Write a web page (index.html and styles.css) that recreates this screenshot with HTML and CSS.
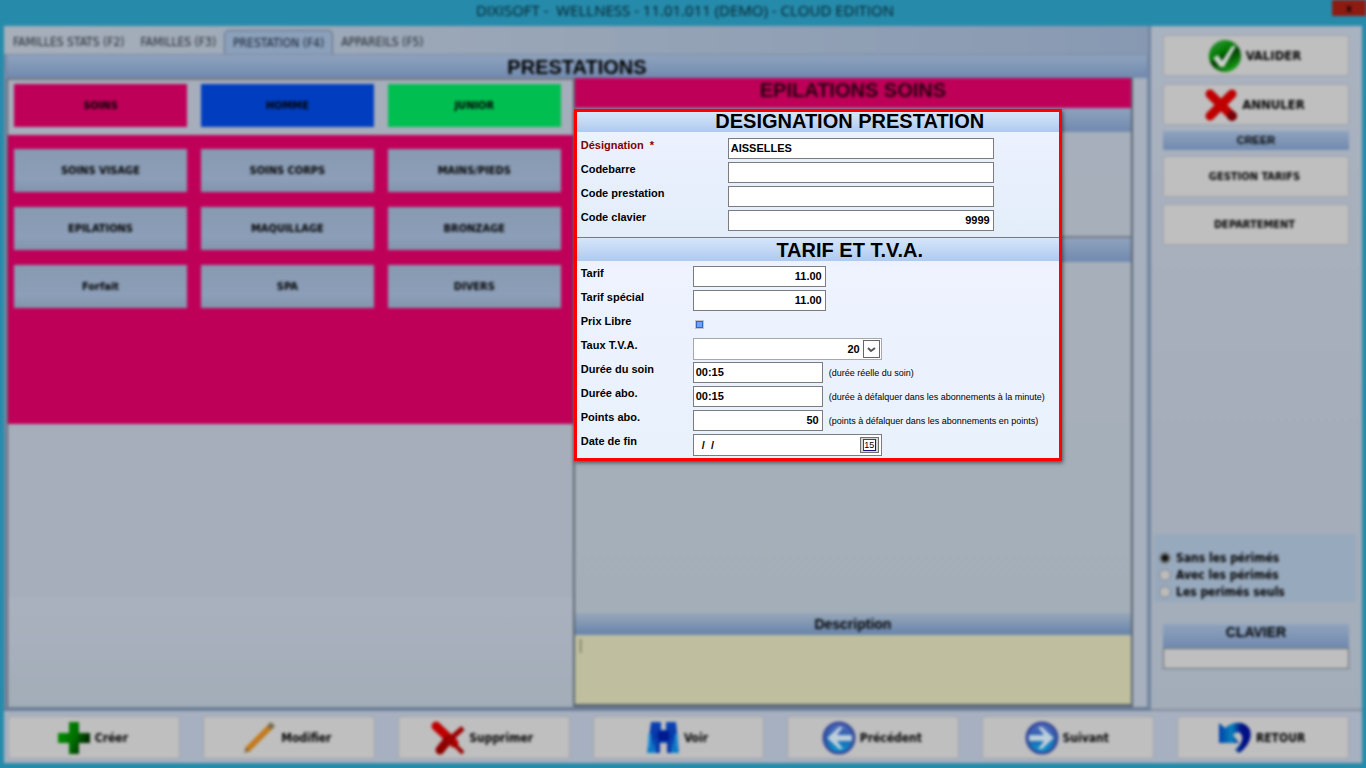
FILE: index.html
```html
<!DOCTYPE html>
<html lang="fr">
<head>
<meta charset="utf-8">
<meta name="viewport" content="width=device-width, initial-scale=1">
<title>DIXISOFT - WELLNESS</title>
<link rel="stylesheet" href="styles.css">
</head>
<body>
<div class="stage">
  <div class="app">
    <header class="titlebar">
      <h1 class="titlebar-text">DIXISOFT -&nbsp; WELLNESS - 11.01.011 (DEMO) - CLOUD EDITION</h1>
      <button class="close" type="button" aria-label="Fermer">x</button>
    </header>
    <div class="workspace">
      <main class="main">
        <nav class="tabs">
          <button class="tab" type="button">FAMILLES STATS (F2)</button>
          <button class="tab" type="button">FAMILLES (F3)</button>
          <button class="tab tab-active" type="button">PRESTATION (F4)</button>
          <button class="tab" type="button">APPAREILS (F5)</button>
        </nav>
        <div class="sheet">
          <h2 class="band sheet-title">PRESTATIONS</h2>
          <div class="columns">
            <section class="catalog">
              <div class="departments">
                <button class="tile tile-pink" type="button">SOINS</button>
                <button class="tile tile-blue" type="button">HOMME</button>
                <button class="tile tile-green" type="button">JUNIOR</button>
              </div>
              <div class="families">
                <button class="tile" type="button">SOINS VISAGE</button>
                <button class="tile" type="button">SOINS CORPS</button>
                <button class="tile" type="button">MAINS/PIEDS</button>
                <button class="tile" type="button">EPILATIONS</button>
                <button class="tile" type="button">MAQUILLAGE</button>
                <button class="tile" type="button">BRONZAGE</button>
                <button class="tile" type="button">Forfait</button>
                <button class="tile" type="button">SPA</button>
                <button class="tile" type="button">DIVERS</button>
              </div>
            </section>
            <section class="detail">
              <h2 class="detail-title">EPILATIONS SOINS</h2>
              <div class="band detail-band"></div>
              <div class="detail-top"></div>
              <div class="band detail-band"></div>
              <div class="detail-fill"></div>
              <label class="band description-label" for="description">Description</label>
              <textarea class="description" id="description">|</textarea>
            </section>
          </div>
        </div>
      </main>
      <aside class="side">
        <button class="btn btn-large" type="button">
          <svg class="icon" viewBox="0 0 34 34" aria-hidden="true">
            <defs><linearGradient id="ok" x1="0" y1="0" x2="0.6" y2="1"><stop offset="0" stop-color="#3f9c4c"/><stop offset="0.45" stop-color="#007b00"/><stop offset="0.6" stop-color="#003c00"/><stop offset="1" stop-color="#18a018"/></linearGradient></defs>
            <circle cx="17" cy="17" r="16" fill="url(#ok)"/>
            <path d="M5 19l5-3 4 6L24 7h4L16 28h-4z" fill="#c9d3cc"/>
          </svg>VALIDER</button>
        <button class="btn btn-large" type="button">
          <svg class="icon" viewBox="0 0 34 34" aria-hidden="true">
            <path d="M6 6l22 22M28 6L6 28" stroke="#c00000" stroke-width="9" stroke-linecap="round"/>
            <circle cx="28" cy="28" r="5" fill="#760008"/>
          </svg>ANNULER</button>
        <h3 class="band side-title">CREER</h3>
        <button class="btn" type="button">GESTION TARIFS</button>
        <button class="btn" type="button">DEPARTEMENT</button>
        <fieldset class="filters">
          <label class="radio"><input type="radio" name="perimes" checked>Sans les périmés</label>
          <label class="radio"><input type="radio" name="perimes">Avec les périmés</label>
          <label class="radio"><input type="radio" name="perimes">Les perimés seuls</label>
        </fieldset>
        <label class="band keypad-label" for="keypad">CLAVIER</label>
        <input class="keypad" id="keypad" type="text">
      </aside>
    </div>
    <footer class="actions">
      <button class="btn" type="button">
        <svg class="icon" viewBox="0 0 34 34" aria-hidden="true">
          <defs><linearGradient id="plus" x1="0" y1="0" x2="1" y2="0.4"><stop offset="0" stop-color="#009400"/><stop offset="0.6" stop-color="#007000"/><stop offset="1" stop-color="#002800"/></linearGradient></defs>
          <path d="M12 1h10v11h11v10H22v11H12V22H1V12h11z" fill="url(#plus)"/>
        </svg>Créer</button>
      <button class="btn" type="button">
        <svg class="icon" viewBox="0 0 34 34" aria-hidden="true">
          <path d="M4 29L28 5" stroke="#c27a1c" stroke-width="6"/>
          <path d="M26 7l4-4" stroke="#7d6a4c" stroke-width="6"/>
          <path d="M1 32l2-6 4 4z" fill="#8b6a3a"/>
        </svg>Modifier</button>
      <button class="btn" type="button">
        <svg class="icon" viewBox="0 0 34 34" aria-hidden="true">
          <path d="M5 5l18 17" stroke="#c00000" stroke-width="9" stroke-linecap="round"/>
          <path d="M18 18l14 14" stroke="#9c0000" stroke-width="4"/>
          <path d="M9 29l8-10" stroke="#8e0000" stroke-width="9" stroke-linecap="round"/>
          <path d="M16 21L32 7" stroke="#9c0000" stroke-width="5"/>
        </svg>Supprimer</button>
      <button class="btn" type="button">
        <svg class="icon" viewBox="0 0 34 34" aria-hidden="true">
          <defs><linearGradient id="bino" x1="0" y1="0" x2="0" y2="1"><stop offset="0" stop-color="#0a43b4"/><stop offset="0.5" stop-color="#0536a8"/><stop offset="1" stop-color="#0e86cc"/></linearGradient></defs>
          <path d="M5 1h10v8h5V1h10l3 31H21V22h-7v10H1z" fill="url(#bino)"/>
          <path d="M12 10h11v10H12z" fill="#001a90"/>
          <path d="M4 13v14M30 13v14" stroke="#168cd4" stroke-width="3"/>
          <path d="M12 20v12M23 20v12" stroke="#0a35a4" stroke-width="4"/>
        </svg>Voir</button>
      <button class="btn" type="button">
        <svg class="icon" viewBox="0 0 34 34" aria-hidden="true">
          <defs><linearGradient id="disc" x1="0" y1="0" x2="0" y2="1"><stop offset="0" stop-color="#5a6cc0"/><stop offset="0.5" stop-color="#245caa"/><stop offset="1" stop-color="#00a0d4"/></linearGradient></defs>
          <circle cx="17" cy="17" r="15" fill="url(#disc)" stroke="#34499a" stroke-width="3"/>
          <path d="M5 17L17 6h4l-6 8h15v6H15l6 8h-4z" fill="#bccfdc"/>
        </svg>Précédent</button>
      <button class="btn" type="button">
        <svg class="icon" viewBox="0 0 34 34" aria-hidden="true">
          <circle cx="17" cy="17" r="15" fill="url(#disc)" stroke="#34499a" stroke-width="3"/>
          <path d="M29 17L17 6h-4l6 8H4v6h15l-6 8h4z" fill="#bccfdc"/>
        </svg>Suivant</button>
      <button class="btn" type="button">
        <svg class="icon" viewBox="0 0 34 34" aria-hidden="true">
          <defs><linearGradient id="undo" x1="0" y1="0" x2="1" y2="0"><stop offset="0" stop-color="#0040a8"/><stop offset="0.4" stop-color="#0880bc"/><stop offset="0.7" stop-color="#001484"/><stop offset="1" stop-color="#000c88"/></linearGradient></defs>
          <path d="M1 2l6 5C15 0 26 0 31 7c5 9-2 20-10 25l-4-3c7-6 9-12 6-16-2-3-6-2-8 1l6 8H1z" fill="url(#undo)"/>
        </svg>RETOUR</button>
    </footer>
  </div>

  <form class="dialog">
    <h2 class="dialog-title">DESIGNATION PRESTATION</h2>
    <div class="rows rows-wide">
      <label class="label label-required" for="designation">Désignation &nbsp;*</label>
      <input class="field" id="designation" type="text" value="AISSELLES">
      <label class="label" for="barcode">Codebarre</label>
      <input class="field" id="barcode" type="text">
      <label class="label" for="code">Code prestation</label>
      <input class="field" id="code" type="text">
      <label class="label" for="key">Code clavier</label>
      <input class="field field-number" id="key" type="text" value="9999">
    </div>
    <h2 class="dialog-title dialog-title-next">TARIF ET T.V.A.</h2>
    <div class="rows">
      <label class="label" for="price">Tarif</label>
      <input class="field field-number field-price" id="price" type="text" value="11.00">
      <label class="label" for="special">Tarif spécial</label>
      <input class="field field-number field-price" id="special" type="text" value="11.00">
      <label class="label" for="free">Prix Libre</label>
      <input class="check" id="free" type="checkbox">
      <label class="label" for="vat">Taux T.V.A.</label>
      <div class="picker picker-light">
        <select class="picker-value picker-select" id="vat"><option>20</option></select>
        <span class="picker-arrow"><svg viewBox="0 0 15 16" aria-hidden="true"><path d="M4 7l3 3 4-3" fill="none" stroke="#555" stroke-width="2"/></svg></span>
      </div>
      <label class="label" for="duration">Durée du soin</label>
      <div class="pair"><input class="field field-short" id="duration" type="text" value="00:15"><span class="hint">(durée réelle du soin)</span></div>
      <label class="label" for="duration-sub">Durée abo.</label>
      <div class="pair"><input class="field field-short" id="duration-sub" type="text" value="00:15"><span class="hint">(durée à défalquer dans les abonnements à la minute)</span></div>
      <label class="label" for="points">Points abo.</label>
      <div class="pair"><input class="field field-short field-number" id="points" type="text" value="50"><span class="hint">(points à défalquer dans les abonnements en points)</span></div>
      <label class="label" for="end">Date de fin</label>
      <div class="picker">
        <input class="picker-value picker-date" id="end" type="text" value="  /  /">
        <button class="calendar" type="button" aria-label="Choisir une date"><span class="calendar-page">15</span></button>
      </div>
    </div>
  </form>
</div>
</body>
</html>
```
FILE: styles.css
```css
* { box-sizing: border-box; }

body {
  margin: 0;
  background: #268bab;
  color: #000;
  font-family: "Liberation Sans", Arial, sans-serif;
  font-size: 11px;
}

h1, h2, h3 { margin: 0; }

button, input, select, textarea {
  margin: 0;
  padding: 0;
  border: 0;
  color: inherit;
  font: inherit;
}

.stage { position: relative; overflow: hidden; }

.app {
  display: flex;
  flex-direction: column;
  min-height: 100vh;
  padding: 0 4px 5px;
  background: #268bab;
  filter: blur(1.4px);
}

.titlebar {
  display: flex;
  flex: 0 0 26px;
  align-items: flex-start;
  margin-right: -4px;
  padding-left: 34px;
}

.titlebar-text {
  flex: 1;
  color: #031c25;
  font-family: "Open Sans", "Noto Sans", sans-serif;
  font-size: 15px;
  font-weight: 400;
  line-height: 21px;
  text-align: center;
}

.close {
  width: 34px;
  height: 16px;
  background: #8e1b12;
  font-weight: 700;
  line-height: 11px;
}

.workspace { display: flex; flex: 1; }

.main {
  display: flex;
  flex: 1;
  flex-direction: column;
  min-width: 0;
  border-right: 3px solid #7285a3;
  border-bottom: 4px solid #6d7e98;
  background: linear-gradient(90deg, #a6afba, #8799b2);
}

.tabs {
  display: flex;
  height: 28px;
  padding: 4px 0 0 1px;
}

.tab {
  padding: 0 8px;
  border-radius: 5px 5px 0 0;
  background: none;
  color: #20262e;
  font-family: "DejaVu Sans Condensed", "DejaVu Sans", sans-serif;
  font-size: 12px;
}

.tab-active {
  border: 1px solid #5e6f86;
  border-bottom: 0;
  background: #8ba0bb;
  color: #101c2c;
}

.sheet {
  display: flex;
  flex: 1;
  flex-direction: column;
  padding-right: 14px;
  border: 1px solid #7789a4;
  border-width: 1px 1px 0 3px;
  background: #a6b0be;
}

.band {
  background: linear-gradient(#8fa3bd, #7089ae);
  font-weight: 700;
  text-align: center;
}

.sheet-title {
  height: 23px;
  margin-right: -14px;
  font-size: 20px;
  line-height: 24px;
}

.columns {
  display: grid;
  flex: 1;
  grid-template-columns: 102fr 101fr;
}

.catalog {
  border-top: 2px solid #737780;
  border-left: 1px solid #54585e;
  background: linear-gradient(#a6aebb 0 517px, #aab1be 517px, #a2adb8);
}

.departments, .families {
  display: grid;
  grid-template-columns: repeat(3, 1fr);
  gap: 15px 14px;
  padding: 4px 12px 8px 6px;
}

.families {
  min-height: 289px;
  align-content: start;
  padding-top: 14px;
  background: #bf0059;
}

.tile {
  height: 43px;
  background: linear-gradient(#879ab0, #8c9eb8 70%, #8295ac);
  font-family: "DejaVu Sans Condensed", "DejaVu Sans", sans-serif;
  font-weight: 700;
  line-height: 41px;
}

.tile-pink { background: #bf0059; }
.tile-blue { background: #003ebf; }
.tile-green { background: #00bf51; }

.detail {
  display: flex;
  flex-direction: column;
  border: 2px solid #5b6672;
  border-width: 0 2px 3px;
  background: linear-gradient(#a8afbc, #a3aeb7);
}

.detail-title {
  height: 30px;
  background: #bf0059;
  color: #26000f;
  font-size: 20px;
  line-height: 25px;
  text-align: center;
}

.detail-band { height: 24px; }
.detail-top { height: 106px; border-bottom: 2px solid #747b86; }
.detail-fill { flex: 1; }

.description-label {
  height: 22px;
  background: linear-gradient(#97a7b8, #6783ab);
  font-size: 14px;
  line-height: 23px;
}

.description {
  height: 69px;
  padding: 2px 4px;
  resize: none;
  background: #bfbf9f;
  color: #62624c;
  font-size: 14px;
}

.side {
  display: flex;
  flex: 0 0 211px;
  flex-direction: column;
  padding: 9px 13px 40px 12px;
  border-bottom: 2px solid #838b98;
  background: linear-gradient(#a9b2c0, #a6adba 60%, #a3adba);
}

.btn {
  display: flex;
  align-items: center;
  justify-content: center;
  gap: 4px;
  height: 41px;
  margin-bottom: 7px;
  padding-right: 3px;
  border: 1px solid #a0a4aa;
  border-radius: 3px;
  background: #bfbfbf;
  font-family: "DejaVu Sans Condensed", "DejaVu Sans", sans-serif;
  font-weight: 700;
}

.btn-large { font-size: 13px; }
.side .btn-large { margin-bottom: 8px; }
.icon { width: 34px; height: 34px; flex: none; fill: none; }

.side-title {
  margin: -2px 0 6px;
  height: 19px;
  font-size: 11px;
  line-height: 18px;
}

.filters {
  margin: auto -7px 22px -9px;
  padding: 15px 0 2px 5px;
  border: 0;
  background: #97a9bd;
}

.radio {
  display: flex;
  align-items: center;
  gap: 5px;
  height: 17px;
  font-family: "DejaVu Sans Condensed", "DejaVu Sans", sans-serif;
  font-size: 12px;
  font-weight: 700;
}

.radio input {
  width: 12px;
  height: 12px;
  appearance: none;
  border: 1px solid #7b8188;
  border-radius: 50%;
  background: #bcbcbc;
}

.radio input:checked { background: radial-gradient(#111 0 3px, #777 4px); }

.keypad-label {
  height: 24px;
  font-size: 14px;
  line-height: 16px;
}

.keypad {
  height: 21px;
  border: 1px solid #666e78;
  background: #bfbfbf;
}

.actions {
  display: grid;
  grid-template-columns: repeat(7, 1fr);
  gap: 23px;
  padding: 5px 13px 4px 4px;
  background: #a7b0c0;
}

.actions .btn { height: 43px; margin: 0; font-size: 12px; }

.dialog {
  position: absolute;
  top: 109px;
  left: 42%;
  width: 488px;
  border: 3px solid #f00;
  background: linear-gradient(#edf2fe, #e3edfa 36%, #eef3fe 45%, #e8f1fc);
  box-shadow: 1px 2px 4px #0008;
}

.dialog-title {
  height: 20px;
  padding-left: 64px;
  background: linear-gradient(#d6e6fa, #aecaf0);
  font-size: 20px;
  line-height: 19px;
  text-align: center;
}

.dialog-title-next {
  height: 24px;
  border-top: 1px solid #777b82;
  line-height: 24px;
}

.rows {
  display: grid;
  grid-template-columns: 112px 1fr;
  grid-auto-rows: 24px;
  align-items: start;
  padding: 4px 0 1px 4px;
}

.rows-wide {
  grid-template-columns: 147px 266px;
  padding: 5px 0 4px 4px;
}

.label { font-weight: 700; line-height: 16px; }
.label-required { color: #800000; }

.field {
  width: 100%;
  height: 21px;
  margin-top: 1px;
  padding: 0 3px 1px 2px;
  border: 1px solid #7c7c80;
  background: #fff;
  font-weight: 700;
}

.field-number { text-align: right; }
.field-price { width: 133px; }
.field-short { flex: none; width: 130px; }

.pair { display: flex; gap: 6px; }

.hint {
  font-size: 9px;
  line-height: 24px;
  white-space: nowrap;
}

.check {
  width: 9px;
  height: 9px;
  margin: 7px 0 0 2px;
  appearance: none;
  border: 1px solid #c4c4c4;
  background: #6ea1ff;
  box-shadow: inset 0 0 0 1px #3566c4;
}

.picker {
  display: flex;
  align-items: center;
  width: 189px;
  height: 22px;
  margin-top: 1px;
  padding-right: 1px;
  border: 1px solid #7c7c80;
  background: #fff;
}

.picker-light { border-color: #a8a8ac; }

.picker-value {
  flex: 1;
  min-width: 0;
  height: 18px;
  background: #fff;
  font-weight: 700;
}

.picker-select { appearance: none; padding-right: 3px; text-align: right; text-align-last: right; }
.picker-date { padding: 0 0 1px 2px; }

.picker-arrow {
  width: 17px;
  height: 18px;
  border: 1px solid #666;
}

.picker-arrow svg { display: block; width: 15px; height: 16px; }

.calendar {
  display: grid;
  place-items: center;
  width: 19px;
  height: 16px;
  margin-right: 1px;
  border: 1px solid #707070;
  background: #d6d6d6;
}

.calendar-page {
  width: 13px;
  height: 12px;
  border: 1px solid #444;
  border-right-color: #15157a;
  border-bottom-color: #15157a;
  background: #fff;
  font-size: 9px;
  line-height: 11px;
}
```
